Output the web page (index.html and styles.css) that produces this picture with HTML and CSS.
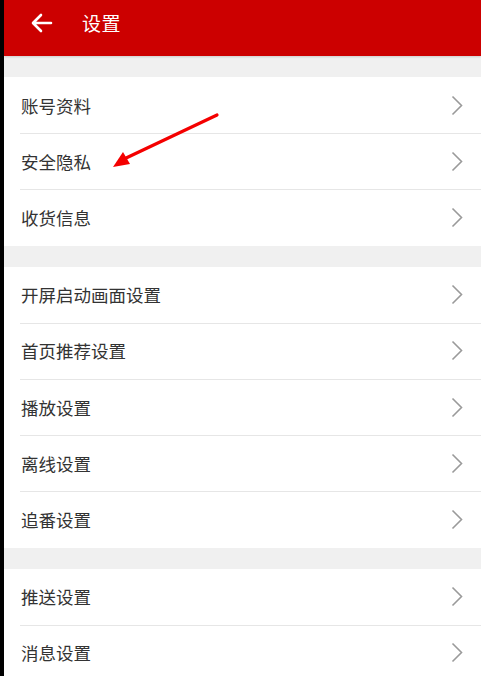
FILE: index.html
```html
<!DOCTYPE html>
<html lang="zh-CN">
<head>
<meta charset="utf-8">
<title>设置</title>
<link rel="stylesheet" href="styles.css">
</head>
<body>
<div class="frame">
  <div class="edge"></div>
  <div class="app">
    <header class="topbar">
      <svg class="back" width="22" height="20" viewBox="0 0 22 20"><path d="M20 10H3M10 2L2 10l8 8" fill="none" stroke="#fff" stroke-width="2.6" stroke-linecap="round" stroke-linejoin="round"/></svg>
      <span class="title">设置</span>
    </header>
    <div class="gap"></div>
    <section class="group">
      <div class="row"><span>账号资料</span><svg class="chev" width="12" height="21" viewBox="0 0 12 21"><path d="M1.5 1.5L10.5 10.5L1.5 19.5" fill="none" stroke="#9a9a9a" stroke-width="1.6"/></svg></div>
      <div class="row"><span>安全隐私</span><svg class="chev" width="12" height="21" viewBox="0 0 12 21"><path d="M1.5 1.5L10.5 10.5L1.5 19.5" fill="none" stroke="#9a9a9a" stroke-width="1.6"/></svg></div>
      <div class="row"><span>收货信息</span><svg class="chev" width="12" height="21" viewBox="0 0 12 21"><path d="M1.5 1.5L10.5 10.5L1.5 19.5" fill="none" stroke="#9a9a9a" stroke-width="1.6"/></svg></div>
    </section>
    <div class="gap"></div>
    <section class="group">
      <div class="row"><span>开屏启动画面设置</span><svg class="chev" width="12" height="21" viewBox="0 0 12 21"><path d="M1.5 1.5L10.5 10.5L1.5 19.5" fill="none" stroke="#9a9a9a" stroke-width="1.6"/></svg></div>
      <div class="row"><span>首页推荐设置</span><svg class="chev" width="12" height="21" viewBox="0 0 12 21"><path d="M1.5 1.5L10.5 10.5L1.5 19.5" fill="none" stroke="#9a9a9a" stroke-width="1.6"/></svg></div>
      <div class="row"><span>播放设置</span><svg class="chev" width="12" height="21" viewBox="0 0 12 21"><path d="M1.5 1.5L10.5 10.5L1.5 19.5" fill="none" stroke="#9a9a9a" stroke-width="1.6"/></svg></div>
      <div class="row"><span>离线设置</span><svg class="chev" width="12" height="21" viewBox="0 0 12 21"><path d="M1.5 1.5L10.5 10.5L1.5 19.5" fill="none" stroke="#9a9a9a" stroke-width="1.6"/></svg></div>
      <div class="row"><span>追番设置</span><svg class="chev" width="12" height="21" viewBox="0 0 12 21"><path d="M1.5 1.5L10.5 10.5L1.5 19.5" fill="none" stroke="#9a9a9a" stroke-width="1.6"/></svg></div>
    </section>
    <div class="gap"></div>
    <section class="group">
      <div class="row"><span>推送设置</span><svg class="chev" width="12" height="21" viewBox="0 0 12 21"><path d="M1.5 1.5L10.5 10.5L1.5 19.5" fill="none" stroke="#9a9a9a" stroke-width="1.6"/></svg></div>
      <div class="row"><span>消息设置</span><svg class="chev" width="12" height="21" viewBox="0 0 12 21"><path d="M1.5 1.5L10.5 10.5L1.5 19.5" fill="none" stroke="#9a9a9a" stroke-width="1.6"/></svg></div>
    </section>
    <svg class="annot" width="120" height="70" viewBox="0 0 120 70">
      <path d="M109 5L16 49" stroke="#f40000" stroke-width="3.2" stroke-linecap="round" fill="none"/>
      <path d="M5 57L15 42L22 54Z" fill="#f40000"/>
    </svg>
  </div>
</div>
</body>
</html>
```
FILE: styles.css
```css
html, body {
  margin: 0;
  padding: 0;
  background: #000;
}
body {
  font-family: "Noto Sans CJK SC", "Noto Sans", sans-serif;
  overflow: hidden;
}
.frame {
  display: flex;
  width: 481px;
  height: 676px;
  overflow: hidden;
}
.edge {
  width: 4px;
  flex: none;
  background: #000;
}
.app {
  position: relative;
  flex: 1;
  background: #f0f0f0;
  display: flex;
  flex-direction: column;
}
.topbar {
  height: 56px;
  flex: none;
  background: #cc0000;
  display: flex;
  align-items: center;
  box-shadow: 0 1px 2px rgba(0,0,0,0.15);
  position: relative;
  z-index: 1;
}
.back {
  margin-left: 27px;
  margin-top: -11px;
}
.title {
  color: #fff;
  font-size: 19px;
  margin-left: 29px;
  margin-top: -12px;
  letter-spacing: 0.5px;
}
.gap {
  height: 21px;
  flex: none;
}
.group {
  background: #fff;
  flex: none;
}
.row {
  height: 56.2px;
  box-sizing: border-box;
  display: flex;
  align-items: center;
  justify-content: space-between;
  padding: 0 18px 0 17px;
  position: relative;
  font-size: 17.5px;
  color: #333;
}
.row + .row::before {
  content: "";
  position: absolute;
  left: 16px;
  right: 0;
  top: 0;
  height: 1px;
  background: #e6e6e6;
}
.chev {
  flex: none;
}
.annot {
  position: absolute;
  left: 104px;
  top: 110px;
}
```
